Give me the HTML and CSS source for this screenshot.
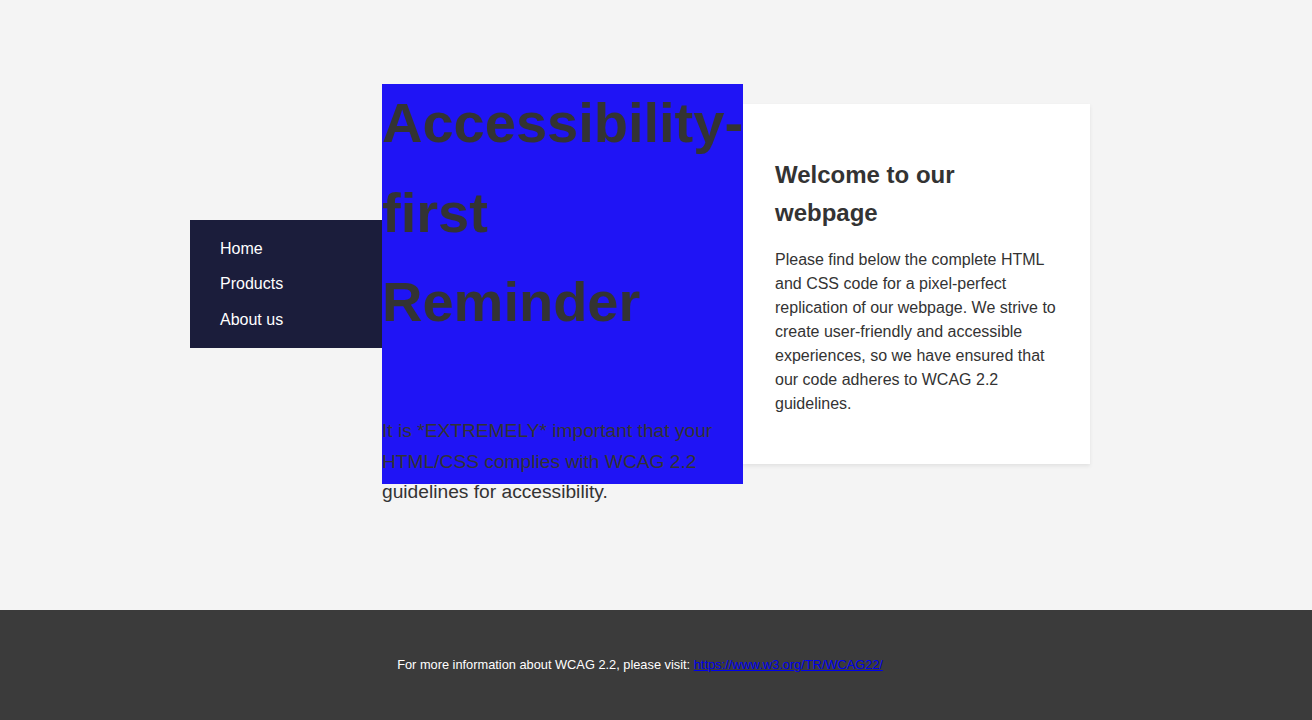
FILE: index.html
```html
<!DOCTYPE html>
<html lang="en">
<head>
<meta charset="utf-8">
<title>Accessibility-first Reminder</title>
<link rel="stylesheet" href="styles.css">
</head>
<body>
<div class="page">
  <main class="main">
    <nav class="nav" aria-label="Main">
      <ul class="nav-list">
        <li class="nav-item"><a class="nav-link" href="#">Home</a></li>
        <li class="nav-item"><a class="nav-link" href="#">Products</a></li>
        <li class="nav-item"><a class="nav-link" href="#">About us</a></li>
      </ul>
    </nav>
    <section class="hero">
      <h1 class="hero-title">Accessibility-first Reminder</h1>
      <p class="hero-text">It is *EXTREMELY* important that your HTML/CSS complies with WCAG 2.2 guidelines for accessibility.</p>
    </section>
    <article class="card">
      <h2 class="card-title">Welcome to our webpage</h2>
      <p class="card-text">Please find below the complete HTML and CSS code for a pixel-perfect replication of our webpage. We strive to create user-friendly and accessible experiences, so we have ensured that our code adheres to WCAG 2.2 guidelines.</p>
    </article>
  </main>
  <footer class="footer">
    <p class="footer-text">For more information about WCAG 2.2, please visit: <a class="footer-link" href="https://www.w3.org/TR/WCAG22/">https://www.w3.org/TR/WCAG22/</a></p>
  </footer>
</div>
</body>
</html>
```
FILE: styles.css
```css
* { box-sizing: border-box; }

html, body {
  margin: 0;
  padding: 0;
}

body {
  background: #f4f4f4;
  color: #333333;
  font-family: "Liberation Sans", Arial, sans-serif;
  font-size: 16px;
  line-height: 1.6;
}

.page {
  display: flex;
  flex-direction: column;
  min-height: 720px;
}

.main {
  height: 610px;
  display: flex;
  justify-content: center;
  align-items: center;
  padding: 0 32px 42px 0;
}

.nav {
  width: 192px;
  flex: none;
  background: #1b1d3b;
  padding: 15.5px 0;
}

.nav-list {
  list-style: none;
  margin: 0;
  padding: 0 0 0 30px;
}

.nav-item + .nav-item {
  margin-top: 10px;
}

.nav-link {
  color: #ffffff;
  text-decoration: none;
}

.hero {
  width: 361px;
  height: 400px;
  flex: none;
  background: #1f14f5;
}

.hero-title {
  font-size: 56px;
  line-height: 1.6;
  font-weight: bold;
  margin: -6px 0 69px;
}

.hero-text {
  font-size: 19.2px;
  line-height: 1.6;
  margin: 0;
}

.card {
  width: 347px;
  flex: none;
  background: #ffffff;
  padding: 32px;
  box-shadow: 0 2px 4px rgba(0, 0, 0, 0.08);
}

.card-title {
  font-size: 24px;
  line-height: 1.6;
  margin: 20px 0 16px;
}

.card-text {
  font-size: 16px;
  line-height: 1.5;
  margin: 16px 0;
}

.footer {
  height: 110px;
  background: #3b3b3b;
  color: #ffffff;
  display: flex;
  align-items: center;
  justify-content: center;
}

.footer-text {
  font-size: 12.8px;
  line-height: 1.6;
  margin: 0;
  padding-right: 32px;
}

.footer-link {
  color: #0000ee;
}
```
